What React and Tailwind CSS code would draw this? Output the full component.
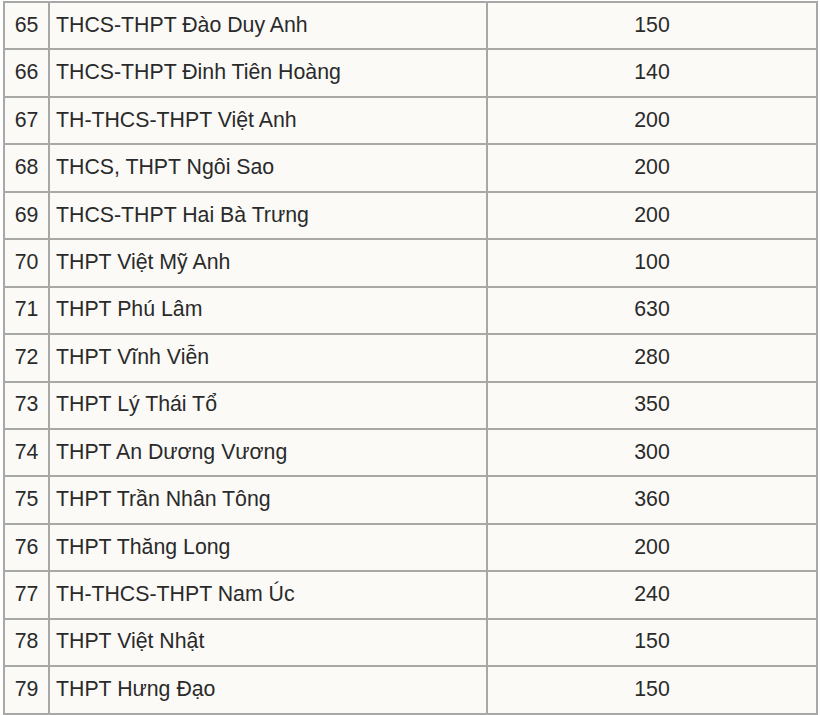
const rows = [
  [65, "THCS-THPT Đào Duy Anh", 150],
  [66, "THCS-THPT Đinh Tiên Hoàng", 140],
  [67, "TH-THCS-THPT Việt Anh", 200],
  [68, "THCS, THPT Ngôi Sao", 200],
  [69, "THCS-THPT Hai Bà Trưng", 200],
  [70, "THPT Việt Mỹ Anh", 100],
  [71, "THPT Phú Lâm", 630],
  [72, "THPT Vĩnh Viễn", 280],
  [73, "THPT Lý Thái Tổ", 350],
  [74, "THPT An Dương Vương", 300],
  [75, "THPT Trần Nhân Tông", 360],
  [76, "THPT Thăng Long", 200],
  [77, "TH-THCS-THPT Nam Úc", 240],
  [78, "THPT Việt Nhật", 150],
  [79, "THPT Hưng Đạo", 150],
];

export default function App() {
  return (
    <div className="w-[820px] h-[715px] overflow-hidden bg-white pl-[3px] pt-[1px]">
      <table
        className="border-collapse w-[813px] table-fixed bg-[#fbfaf7] text-[#2a2a2a] text-[21.3px]"
        style={{ fontFamily: '"Liberation Sans", Arial, sans-serif' }}
      >
        <colgroup>
          <col className="w-[45px]" />
          <col className="w-[438px]" />
          <col className="w-[330px]" />
        </colgroup>
        <tbody>
          {rows.map(([n, name, v]) => (
            <tr key={n} className="h-[47.45px]">
              <td className="border-2 border-[#a8a8a6] text-center p-0">{n}</td>
              <td className="border-2 border-[#a8a8a6] pl-[6px] p-0">{name}</td>
              <td className="border-2 border-[#a8a8a6] text-center p-0">{v}</td>
            </tr>
          ))}
        </tbody>
      </table>
    </div>
  );
}
